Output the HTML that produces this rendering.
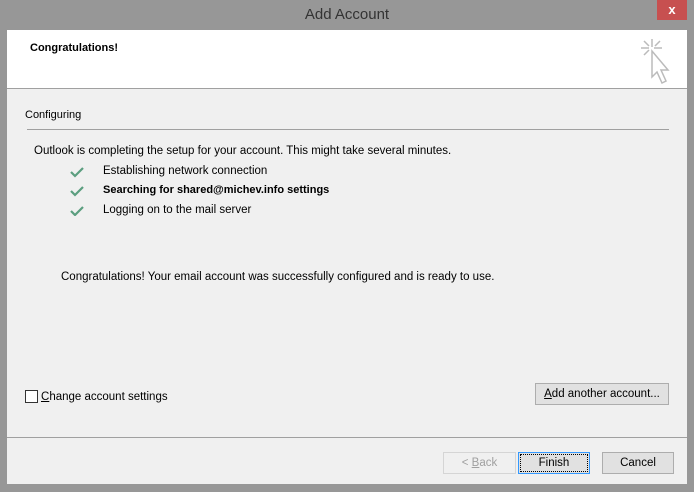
<!DOCTYPE html>
<html><head><style>
*{margin:0;padding:0;box-sizing:border-box}
body{width:694px;height:492px;background:#979797;position:relative;overflow:hidden;font-family:"Liberation Sans",sans-serif;font-size:11.5px;color:#000}
.a{position:absolute;white-space:nowrap}
.btn{position:absolute;height:22px;border:1px solid #adadad;background:#e1e1e1;text-align:center;line-height:20px;font-size:11.5px}
</style></head><body>
<div class="a" style="left:0;top:6px;width:694px;text-align:center;font-size:15px;color:#333">Add Account</div>
<div class="a" style="left:657px;top:0;width:30px;height:20px;background:#c75050;color:#fff;text-align:center;font-size:13px;line-height:19px;font-weight:bold">x</div>
<div class="a" style="left:7px;top:30px;width:680px;height:454px;background:#f0f0f0"></div>
<div class="a" style="left:7px;top:30px;width:680px;height:59px;background:#fff;border-bottom:1px solid #a0a0a0"></div>
<div class="a" style="left:30px;top:42px;font-weight:bold;font-size:11px">Congratulations!</div>
<svg class="a" style="left:638px;top:37px" width="36" height="50" viewBox="0 0 36 50"><g stroke="#bbb" stroke-width="1.5" fill="none"><path d="M14 2v8M3 11h8M16 11h8M6 4l5 5M22 4l-5 5M6 18l5-5"/><path d="M14 14l0 26 5-5 5 11 4-2-5-11 7 0z" fill="#fff"/></g></svg>
<div class="a" style="left:25px;top:109px;font-size:11px">Configuring</div>
<div class="a" style="left:27px;top:129px;width:642px;height:1px;background:#a0a0a0"></div>
<div class="a" style="left:34px;top:145px">Outlook is completing the setup for your account. This might take several minutes.</div>
<svg class="a" style="left:70px;top:166px" width="16" height="50" viewBox="0 0 16 50"><g stroke="#5b9e7f" stroke-width="2.2" fill="none"><path d="M1 6l4 4 8-8M1 25l4 4 8-8M1 45l4 4 8-8"/></g></svg>
<div class="a" style="left:103px;top:165px">Establishing network connection</div>
<div class="a" style="left:103px;top:184px;font-weight:bold;font-size:11px">Searching for shared@michev.info settings</div>
<div class="a" style="left:103px;top:204px">Logging on to the mail server</div>
<div class="a" style="left:61px;top:271px">Congratulations! Your email account was successfully configured and is ready to use.</div>
<div class="a" style="left:25px;top:390px;width:13px;height:13px;border:1px solid #333;background:#fff"></div>
<div class="a" style="left:41px;top:391px"><u>C</u>hange account settings</div>
<div class="btn" style="left:535px;top:383px;width:134px"><u>A</u>dd another account...</div>
<div class="a" style="left:7px;top:437px;width:680px;height:1px;background:#a0a0a0"></div>
<div class="btn" style="left:443px;top:452px;width:73px;color:#a0a0a0;border-color:#d5d5d5;background:#f0f0f0">&lt; <u>B</u>ack</div>
<div class="btn" style="left:518px;top:452px;width:72px;border-color:#3399ff;outline:1px dotted #000;outline-offset:-3px">Finish</div>
<div class="btn" style="left:602px;top:452px;width:72px">Cancel</div>
</body></html>
